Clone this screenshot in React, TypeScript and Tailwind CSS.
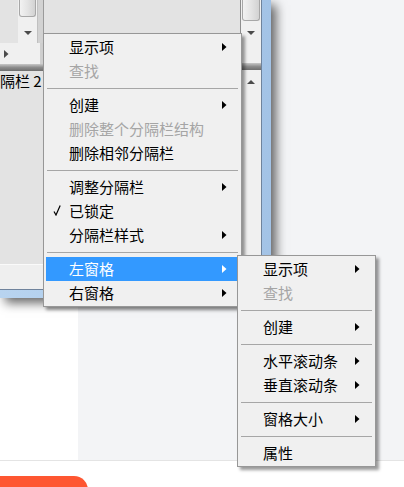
import type { ReactNode } from "react";

type Entry = { label?: string; sub?: boolean; disabled?: boolean; checked?: boolean; active?: boolean; sep?: boolean };

const mainMenu: Entry[] = [
  { label: "显示项", sub: true },
  { label: "查找", disabled: true },
  { sep: true },
  { label: "创建", sub: true },
  { label: "删除整个分隔栏结构", disabled: true },
  { label: "删除相邻分隔栏" },
  { sep: true },
  { label: "调整分隔栏", sub: true },
  { label: "已锁定", checked: true },
  { label: "分隔栏样式", sub: true },
  { sep: true },
  { label: "左窗格", sub: true, active: true },
  { label: "右窗格", sub: true },
];

const paneMenu: Entry[] = [
  { label: "显示项", sub: true },
  { label: "查找", disabled: true },
  { sep: true },
  { label: "创建", sub: true },
  { sep: true },
  { label: "水平滚动条", sub: true },
  { label: "垂直滚动条", sub: true },
  { sep: true },
  { label: "窗格大小", sub: true },
  { sep: true },
  { label: "属性" },
];

function Tri({ dir, color = "#4b4b4b" }: { dir: "down" | "up" | "right"; color?: string }) {
  if (dir === "right")
    return (
      <svg width="5" height="8" viewBox="0 0 5 8">
        <polygon points="0,0 4.5,4 0,8" fill={color} />
      </svg>
    );
  return (
    <svg width="8" height="4" viewBox="0 0 8 4">
      <polygon points={dir === "down" ? "0,0 8,0 4,4" : "0,4 8,4 4,0"} fill={color} />
    </svg>
  );
}

function Menu({ items, arrowPad }: { items: Entry[]; arrowPad: string }) {
  return (
    <div className="border border-[#979797] bg-[#f0f0f0] pl-[2px] pr-[3px] pt-[1px] pb-[1px] shadow-[3px_3px_3px_rgba(0,0,0,0.4)]">
      {items.map((it, i) =>
        it.sep ? (
          <div key={i} className="h-[10px] flex items-center pl-[1px]">
            <div className="h-px w-full bg-[#a6a6a6]" />
          </div>
        ) : (
          <div
            key={i}
            className={`h-[24px] flex items-center relative pl-[23px] ${arrowPad} ${
              it.active ? "bg-[#3399ff] text-white" : it.disabled ? "text-[#a5a5a5]" : "text-black"
            }`}
          >
            {it.checked && (
              <svg className="absolute left-[7px] top-[6px]" width="8" height="11" viewBox="0 0 8 11">
                <path d="M1 6.5 L3 10 L7.2 0.5" stroke="#000" strokeWidth="1.2" fill="none" />
              </svg>
            )}
            <span className="flex-1 text-[15px] leading-[18px]">{it.label}</span>
            {it.sub && <Tri dir="right" color={it.active ? "#ffffff" : "#000000"} />}
          </div>
        )
      )}
    </div>
  );
}

function Thumb({ h }: { h: string }) {
  return (
    <div
      className={`${h} mx-[1px] rounded-b-[3px] border border-t-0 border-[#a7a7a7] bg-gradient-to-r from-[#f2f2f2] via-[#e4e4e4] to-[#d2d2d2]`}
    />
  );
}

function Splitter({ children }: { children?: ReactNode }) {
  return <div className="h-[7px] bg-gradient-to-b from-[#c8c8c8] via-[#8c8c8c] to-[#6e6e6e]">{children}</div>;
}

export default function App() {
  return (
    <div
      className="relative w-[404px] h-[487px] overflow-hidden bg-white"
      style={{ fontFamily: '"Noto Sans CJK SC", "Noto Sans", sans-serif' }}
    >
      {/* page behind the window */}
      <div className="flex flex-col h-full">
        <div className="flex shrink-0 h-[461px] border-b border-[#e4e4e4]">
          <div className="w-[78px] bg-white" />
          <div className="flex-1 bg-[#f3f4f6]" />
        </div>
        <div className="flex-1 min-h-0 pt-[15px] overflow-hidden">
          <div className="w-[88px] h-[20px] bg-[#fe5631] rounded-tr-[14px]" />
        </div>
      </div>

      {/* window */}
      <div className="absolute left-0 top-0 w-[271px] h-[298px] bg-gradient-to-r from-[#b8d4f0] to-[#a3c3e6] shadow-[5px_5px_10px_rgba(0,0,0,0.6)]">
        <div className="flex w-[262px] h-[290px] border-r border-b border-[#6f839c] bg-[#e3e3e3]">
          {/* left pane */}
          <div className="w-[43px] flex flex-col">
            <div className="h-[43px] flex">
              <div className="w-[18px] bg-[#e3e3e3]" />
              <div className="w-[19px] bg-[#f0f0f0] flex flex-col">
                <Thumb h="h-[17px]" />
                <div className="flex justify-center mt-[14px]">
                  <Tri dir="down" />
                </div>
              </div>
              <div className="w-[6px] bg-[#d2d2d2] border-l border-[#c0c0c0]" />
            </div>
            <div className="h-[21px] bg-[#f0f0f0] flex items-center pl-[4px] border-r-[3px] border-[#cfcfcf]">
              <Tri dir="right" />
            </div>
            <Splitter />
            <div className="flex-1 bg-[#e3e3e3] border-b border-[#fafafa]">
              <div className="text-[15px] leading-[18px] text-black whitespace-nowrap pt-[1px]">隔栏 2</div>
            </div>
            <div className="h-[24px] bg-[#efefef]" />
          </div>

          {/* middle pane */}
          <div className="w-[198px] flex flex-col border-l border-[#9a9a9a]">
            <div className="h-[64px] bg-[#e3e3e3]" />
            <Splitter />
            <div className="flex-1 bg-[#f0f0f0]" />
          </div>

          {/* right scrollbar */}
          <div className="w-[21px] flex flex-col border-l border-[#8e8e8e] bg-[#f0f0f0]">
            <Thumb h="h-[21px]" />
            <div className="flex justify-center mt-[10px]">
              <Tri dir="down" />
            </div>
            <div className="h-[28px]" />
            <Splitter />
            <div className="flex justify-center mt-[10px]">
              <Tri dir="up" />
            </div>
            <div className="flex-1" />
          </div>
        </div>
      </div>

      {/* context menu */}
      <div className="absolute left-[43px] top-[33px] w-[199px]">
        <Menu items={mainMenu} arrowPad="pr-[11px]" />
      </div>

      {/* submenu */}
      <div className="absolute left-[237px] top-[255px] w-[139px]">
        <Menu items={paneMenu} arrowPad="pr-[12px]" />
      </div>
    </div>
  );
}
